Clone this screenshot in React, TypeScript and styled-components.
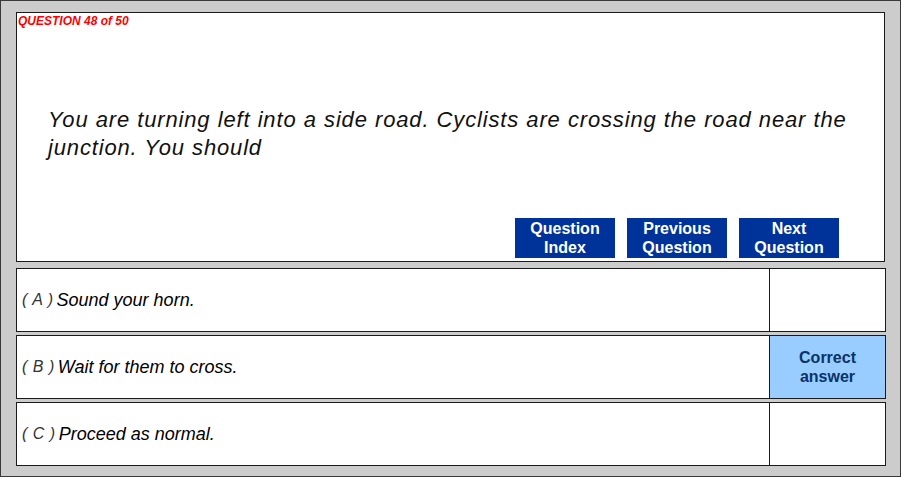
import React from "react";
import styled, { createGlobalStyle } from "styled-components";

const Global = createGlobalStyle`
  html, body { margin: 0; padding: 0; background: #ffffff; }
  * { box-sizing: border-box; }
`;

const Frame = styled.div`
  width: 901px;
  height: 477px;
  border: 1px solid #3a3a3a;
  background: #cccccc;
  padding: 11px 0 0 15px;
  display: flex;
  flex-direction: column;
  font-family: "Liberation Sans", Arial, sans-serif;
`;

const QuestionPanel = styled.section`
  width: 869px;
  height: 250px;
  background: #ffffff;
  border: 1px solid #1a1a1a;
  display: flex;
  flex-direction: column;
  padding: 1px 0 3px 1px;
`;

const Counter = styled.div`
  color: #ff0000;
  font-weight: bold;
  font-style: italic;
  font-size: 12px;
  line-height: 14px;
`;

const QuestionText = styled.p`
  margin: 78px 10px 0 30px;
  font-style: italic;
  font-size: 22px;
  line-height: 28px;
  letter-spacing: 0.84px;
  word-spacing: 0.3px;
  color: #111;
`;

const NavBar = styled.nav`
  margin-top: auto;
  padding-right: 45px;
  display: flex;
  justify-content: flex-end;
  gap: 12px;
`;

const NavButton = styled.button`
  width: 100px;
  height: 40px;
  border: none;
  padding: 0;
  background: #003399;
  color: #ffffff;
  font-family: "Liberation Sans", Arial, sans-serif;
  font-weight: bold;
  font-size: 16px;
  line-height: 19px;
  text-align: center;
`;

const Answers = styled.div`
  margin-top: 6px;
  display: flex;
  flex-direction: column;
  gap: 3px;
`;

const AnswerRow = styled.div`
  width: 870px;
  height: 64px;
  display: grid;
  grid-template-columns: 753px 1fr;
  border: 1px solid #1a1a1a;
  background: #ffffff;
`;

const AnswerCell = styled.div`
  display: flex;
  align-items: center;
  padding-left: 5px;
  font-style: italic;
  font-size: 18px;
  color: #000;
  border-right: 1px solid #1a1a1a;
`;

const Letter = styled.span`
  font-size: 16px;
  color: #333;
  letter-spacing: 0.5px;
  margin-right: 3px;
`;

const MarkCell = styled.div<{ $correct?: boolean }>`
  display: flex;
  align-items: center;
  justify-content: center;
  text-align: center;
  background: ${(p) => (p.$correct ? "#99ccff" : "#ffffff")};
  color: #0a3366;
  font-weight: bold;
  font-size: 16px;
  line-height: 19px;
`;

const answers = [
  { letter: "A", text: "Sound your horn.", correct: false },
  { letter: "B", text: "Wait for them to cross.", correct: true },
  { letter: "C", text: "Proceed as normal.", correct: false },
];

export default function App() {
  return (
    <>
      <Global />
      <Frame>
        <QuestionPanel>
          <Counter>QUESTION 48 of 50</Counter>
          <QuestionText>
            You are turning left into a side road. Cyclists are crossing the road near the junction. You should
          </QuestionText>
          <NavBar>
            <NavButton>Question<br />Index</NavButton>
            <NavButton>Previous<br />Question</NavButton>
            <NavButton>Next<br />Question</NavButton>
          </NavBar>
        </QuestionPanel>
        <Answers>
          {answers.map((a) => (
            <AnswerRow key={a.letter}>
              <AnswerCell>
                <Letter>( {a.letter} )</Letter>
                {a.text}
              </AnswerCell>
              <MarkCell $correct={a.correct}>
                {a.correct ? (
                  <>
                    Correct
                    <br />
                    answer
                  </>
                ) : null}
              </MarkCell>
            </AnswerRow>
          ))}
        </Answers>
      </Frame>
    </>
  );
}
